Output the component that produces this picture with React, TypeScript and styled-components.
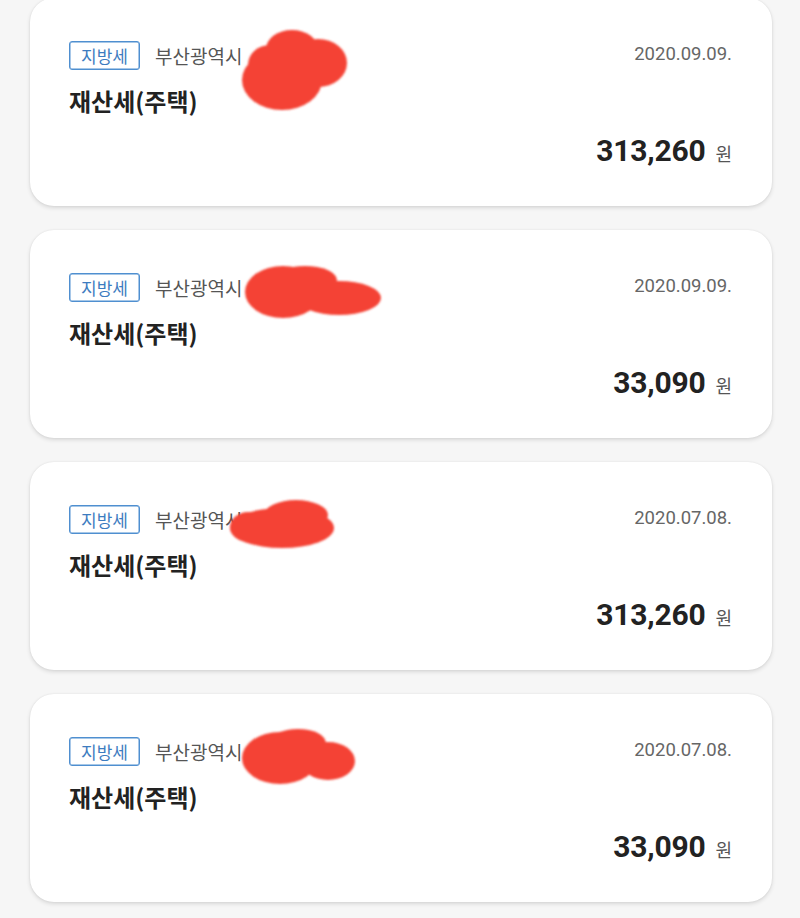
import React from 'react'
import styled, { createGlobalStyle } from 'styled-components'

const GlobalStyle = createGlobalStyle`
  html, body {
    margin: 0;
    padding: 0;
    background: #f6f6f6;
  }
  body {
    font-family: Roboto, 'Noto Sans CJK KR', sans-serif;
  }
`

type Blob = { x: number; y: number; w: number; h: number; shapes: Array<[number, number, number, number]> }

type Bill = {
  region: string
  date: string
  amount: string
  blob: Blob
}

const bills: Bill[] = [
  {
    region: '부산광역시',
    date: '2020.09.09.',
    amount: '313,260',
    blob: {
      x: 210, y: 27, w: 108, h: 85,
      shapes: [[42, 55, 40, 30], [78, 38, 29, 24], [52, 24, 26, 19], [30, 40, 22, 20]]
    }
  },
  {
    region: '부산광역시',
    date: '2020.09.09.',
    amount: '33,090',
    blob: {
      x: 213, y: 32, w: 140, h: 60,
      shapes: [[40, 30, 38, 26], [96, 36, 42, 17], [62, 18, 32, 14]]
    }
  },
  {
    region: '부산광역시',
    date: '2020.07.08.',
    amount: '313,260',
    blob: {
      x: 198, y: 35, w: 112, h: 51,
      shapes: [[54, 31, 52, 20], [68, 18, 32, 15], [20, 30, 18, 15]]
    }
  },
  {
    region: '부산광역시',
    date: '2020.07.08.',
    amount: '33,090',
    blob: {
      x: 210, y: 33, w: 116, h: 57,
      shapes: [[40, 31, 38, 26], [88, 34, 27, 19], [58, 16, 28, 14]]
    }
  }
]

const Page = styled.div`
  display: flex;
  flex-direction: column;
  gap: 24px;
  padding: 0 28px 16px 30px;
  margin-top: -2px;
`

const Card = styled.div`
  position: relative;
  height: 208px;
  box-sizing: border-box;
  padding: 43px 40px 0 39px;
  background: #fff;
  border-radius: 24px;
  box-shadow: 0 2px 4px rgba(0, 0, 0, 0.12), 0 0 2px rgba(0, 0, 0, 0.08);
  display: flex;
  flex-direction: column;
`

const TopRow = styled.div`
  display: flex;
  align-items: center;
  justify-content: space-between;
  height: 29px;
`

const Meta = styled.div`
  display: flex;
  align-items: center;
  gap: 15px;
`

const Tag = styled.span`
  display: inline-flex;
  align-items: center;
  justify-content: center;
  box-sizing: border-box;
  height: 29px;
  width: 71px;
  border: 1px solid #4f8fd0;
  box-shadow: inset 0 0 0 0.5px #4f8fd0;
  border-radius: 3px;
  color: #3d7cc0;
  font-family: 'Noto Sans CJK KR', sans-serif;
  font-size: 17px;
`

const Region = styled.span`
  color: #555;
  font-family: 'Noto Sans CJK KR', sans-serif;
  font-size: 19px;
`

const DateText = styled.span`
  color: #666;
  font-size: 18.5px;
  margin-top: -4px;
`

const Title = styled.div`
  margin-top: 16px;
  line-height: 30px;
  color: #222;
  font-family: 'Noto Sans CJK KR', sans-serif;
  font-weight: 700;
  font-size: 24px;
`

const AmountRow = styled.div`
  margin-top: 17px;
  display: flex;
  align-items: baseline;
  justify-content: flex-end;
  gap: 10px;
  line-height: 36px;
`

const Amount = styled.span`
  color: #222;
  font-weight: 700;
  font-size: 30px;
  letter-spacing: -0.2px;
`

const Won = styled.span`
  color: #555;
  font-family: 'Noto Sans CJK KR', sans-serif;
  font-size: 18px;
`

const Scribble = styled.svg<{ $x: number; $y: number }>`
  position: absolute;
  left: ${p => p.$x}px;
  top: ${p => p.$y}px;
  overflow: visible;
`

const Redaction = ({ blob }: { blob: Blob }) => (
  <Scribble $x={blob.x} $y={blob.y} width={blob.w} height={blob.h} viewBox={`0 0 ${blob.w} ${blob.h}`}>
    <filter id="soft">
      <feGaussianBlur stdDeviation="1" />
    </filter>
    <g fill="#f44336" filter="url(#soft)">
      {blob.shapes.map(([cx, cy, rx, ry], i) => (
        <ellipse key={i} cx={cx} cy={cy} rx={rx} ry={ry} />
      ))}
    </g>
  </Scribble>
)

const App = () => {
  return (
    <>
      <GlobalStyle />
      <Page>
        {bills.map((bill, i) => (
          <Card key={i}>
            <TopRow>
              <Meta>
                <Tag>지방세</Tag>
                <Region>{bill.region}</Region>
              </Meta>
              <DateText>{bill.date}</DateText>
            </TopRow>
            <Title>재산세(주택)</Title>
            <AmountRow>
              <Amount>{bill.amount}</Amount>
              <Won>원</Won>
            </AmountRow>
            <Redaction blob={bill.blob} />
          </Card>
        ))}
      </Page>
    </>
  )
}

export default App
